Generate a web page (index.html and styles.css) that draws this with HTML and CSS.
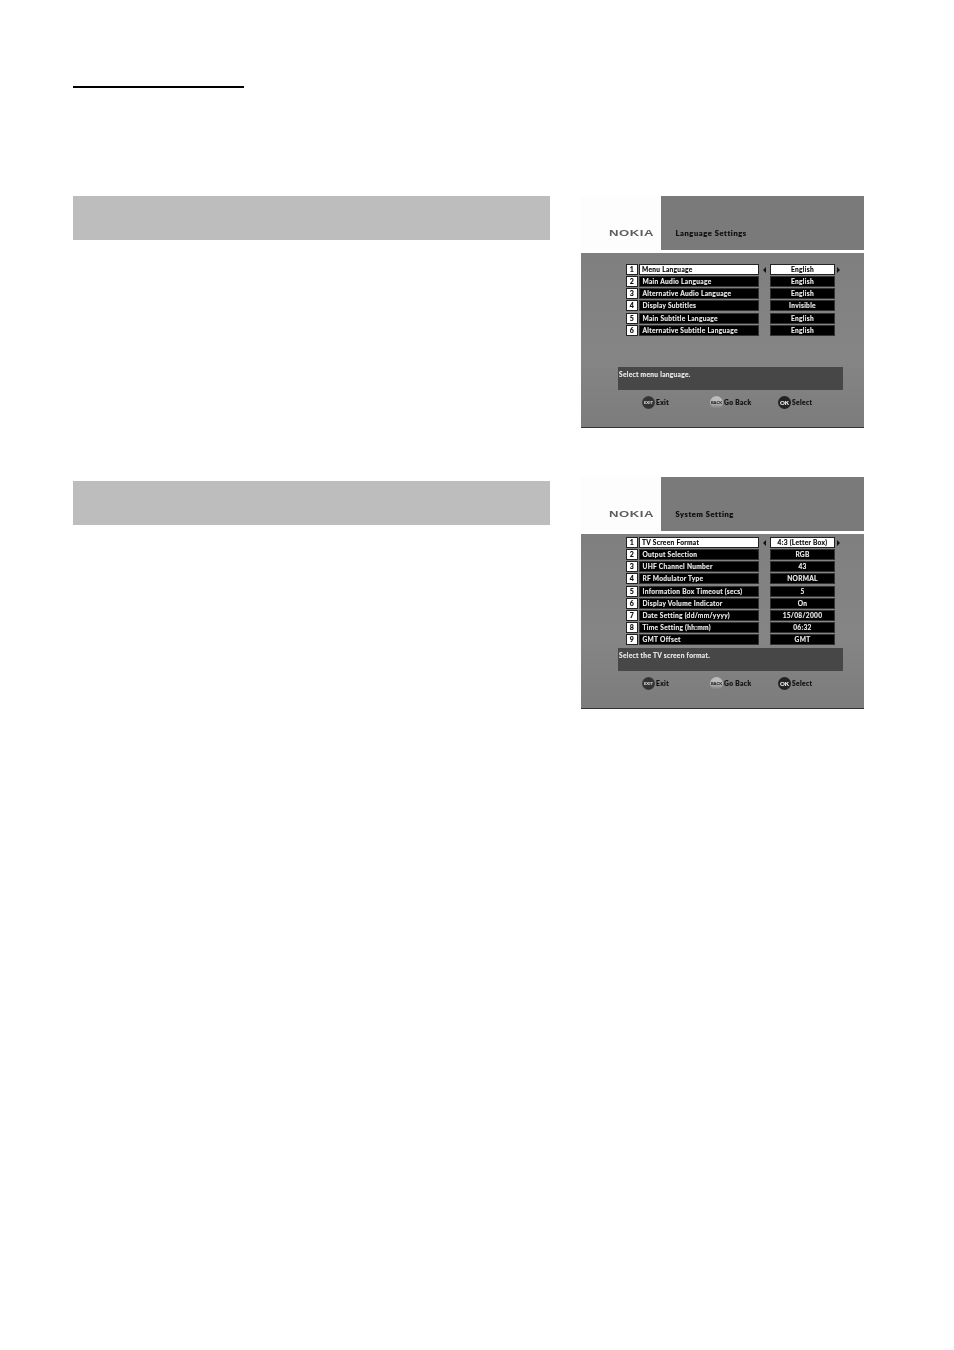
FILE: index.html
```html
<!DOCTYPE html>
<html lang="en">
<head>
<meta charset="utf-8">
<title>Settings</title>
<link rel="stylesheet" href="styles.css">
</head>
<body>
<main class="page">
  <div class="rule"></div>

  <section class="section first">
    <div class="bar"></div>
    <div class="screen">
      <header class="head">
        <div class="brand"><span class="logo">NOKIA</span></div>
        <div class="title">Language Settings</div>
      </header>
      <div class="body body-lang">
        <div class="rows">
          <div class="row sel"><b class="num">1</b><span class="label">Menu Language</span><i class="arrow left"></i><span class="value">English</span><i class="arrow right"></i></div>
          <div class="row"><b class="num">2</b><span class="label">Main Audio Language</span><i class="arrow"></i><span class="value">English</span></div>
          <div class="row"><b class="num">3</b><span class="label">Alternative Audio Language</span><i class="arrow"></i><span class="value">English</span></div>
          <div class="row"><b class="num">4</b><span class="label">Display Subtitles</span><i class="arrow"></i><span class="value">Invisible</span></div>
          <div class="row"><b class="num">5</b><span class="label">Main Subtitle Language</span><i class="arrow"></i><span class="value">English</span></div>
          <div class="row"><b class="num">6</b><span class="label">Alternative Subtitle Language</span><i class="arrow"></i><span class="value">English</span></div>
        </div>
        <div class="message">Select menu language.</div>
        <div class="keys">
          <span class="key k-exit"><b class="btn">EXIT</b>Exit</span>
          <span class="key k-back"><b class="btn light">BACK</b>Go Back</span>
          <span class="key k-ok"><b class="btn ok">OK</b>Select</span>
        </div>
      </div>
    </div>
  </section>

  <section class="section second">
    <div class="bar"></div>
    <div class="screen">
      <header class="head">
        <div class="brand"><span class="logo">NOKIA</span></div>
        <div class="title">System Setting</div>
      </header>
      <div class="body body-sys">
        <div class="rows">
          <div class="row sel"><b class="num">1</b><span class="label">TV Screen Format</span><i class="arrow left"></i><span class="value">4:3 (Letter Box)</span><i class="arrow right"></i></div>
          <div class="row"><b class="num">2</b><span class="label">Output Selection</span><i class="arrow"></i><span class="value">RGB</span></div>
          <div class="row"><b class="num">3</b><span class="label">UHF Channel Number</span><i class="arrow"></i><span class="value">43</span></div>
          <div class="row"><b class="num">4</b><span class="label">RF Modulator Type</span><i class="arrow"></i><span class="value">NORMAL</span></div>
          <div class="row"><b class="num">5</b><span class="label">Information Box Timeout (secs)</span><i class="arrow"></i><span class="value">5</span></div>
          <div class="row"><b class="num">6</b><span class="label">Display Volume Indicator</span><i class="arrow"></i><span class="value">On</span></div>
          <div class="row"><b class="num">7</b><span class="label">Date Setting (dd/mm/yyyy)</span><i class="arrow"></i><span class="value">15/08/2000</span></div>
          <div class="row"><b class="num">8</b><span class="label">Time Setting (hh:mm)</span><i class="arrow"></i><span class="value">06:32</span></div>
          <div class="row"><b class="num">9</b><span class="label">GMT Offset</span><i class="arrow"></i><span class="value">GMT</span></div>
        </div>
        <div class="message">Select the TV screen format.</div>
        <div class="keys">
          <span class="key k-exit"><b class="btn">EXIT</b>Exit</span>
          <span class="key k-back"><b class="btn light">BACK</b>Go Back</span>
          <span class="key k-ok"><b class="btn ok">OK</b>Select</span>
        </div>
      </div>
    </div>
  </section>
</main>
</body>
</html>
```

FILE: styles.css
```css
* { box-sizing: border-box; }
html, body { margin: 0; padding: 0; background: #fff; }
body { height: 1350px; overflow: hidden; }
.page { padding: 86px 90px 0 73px; font-family: "Lato", "Liberation Sans", sans-serif; }
.rule { width: 171px; height: 2px; background: #000; }
.section { display: flex; justify-content: space-between; align-items: flex-start; }
.first { margin-top: 108px; }
.second { margin-top: 49px; }
.bar { width: 477px; height: 44px; background: #bdbdbd; }
.second .bar { margin-top: 4px; }
.screen { width: 283px; height: 232px; display: flex; flex-direction: column; filter: grayscale(1) blur(0.4px); }
.head { height: 54px; display: flex; flex: none; }
.brand { width: 80px; background: #fdfdfd; display: flex; align-items: flex-end; padding: 0 0 11.5px 28px; }
.logo { font: 700 9.5px/12px "Liberation Sans", sans-serif; letter-spacing: 0.4px; color: #5c5c5c; transform: scaleX(1.38); transform-origin: left; }
.title { flex: 1; background: #7a7a7a; color: #0c0c0c; font-size: 7.5px; font-weight: 900; line-height: 10px; padding: 33px 0 0 14.5px; letter-spacing: 0.6px; -webkit-text-stroke: 0.15px #0c0c0c; }
.body { margin-top: 3px; flex: 1; background: linear-gradient(#7f7f7f, #858585 60%, #7c7c7c); border-bottom: 1px solid #333; display: flex; flex-direction: column; padding-bottom: 18px; }
.body-lang { padding-top: 11px; }
.body-sys { padding-top: 3px; }
.rows { display: flex; flex-direction: column; gap: 1.15px; padding-left: 45px; }
.row { display: flex; height: 11px; font-size: 6.6px; line-height: 9px; font-weight: 700; color: #eee; letter-spacing: 0.3px; -webkit-text-stroke: 0.12px currentColor; }
.num { width: 12px; margin-right: 1px; background: #fff; border: 1px solid #222; color: #111; font-size: 7px; font-weight: 900; text-align: center; }
.label { width: 120px; background: #000; border: 1px solid #333; padding-left: 2.5px; white-space: nowrap; }
.value { width: 65px; background: #000; border: 1px solid #333; text-align: center; white-space: nowrap; }
.sel .label, .sel .value { background: #fff; color: #000; border-color: #222; }
.sel .label { padding-left: 2px; }
.arrow { width: 11px; position: relative; }
.arrow.left::before, .arrow.right::before { content: ""; position: absolute; top: 2.5px; border-style: solid; border-width: 3px 0 3px 3.5px; border-color: transparent transparent transparent #111; }
.arrow.left::before { left: 4px; border-width: 3px 3.5px 3px 0; border-color: transparent #111 transparent transparent; }
.arrow.right { width: 7px; }
.arrow.right::before { left: 2px; }
.message { margin: auto 21px 0 37px; height: 23px; background: #474747; color: #eee; font-size: 6.6px; font-weight: 700; line-height: 10px; padding: 2px 1px; letter-spacing: 0.3px; -webkit-text-stroke: 0.12px #eee; }
.keys { height: 13px; margin-top: 6px; font-size: 6.6px; font-weight: 900; line-height: 13px; color: #111; display: flex; -webkit-text-stroke: 0.15px #111; }
.key { display: flex; align-items: center; gap: 1px; white-space: nowrap; letter-spacing: 0.4px; }
.k-exit { margin-left: 61px; width: 68px; }
.k-back { width: 68px; }
.btn { width: 13px; height: 13px; border-radius: 50%; background: radial-gradient(#333 55%, #555); color: #ddd; font-size: 4.2px; line-height: 13px; font-weight: 900; text-align: center; letter-spacing: 0; flex: none; -webkit-text-stroke: 0; }
.btn.light { background: linear-gradient(#bbb 50%, #777); color: #111; }
.btn.ok { background: #222; color: #fff; font-size: 6px; }
```
